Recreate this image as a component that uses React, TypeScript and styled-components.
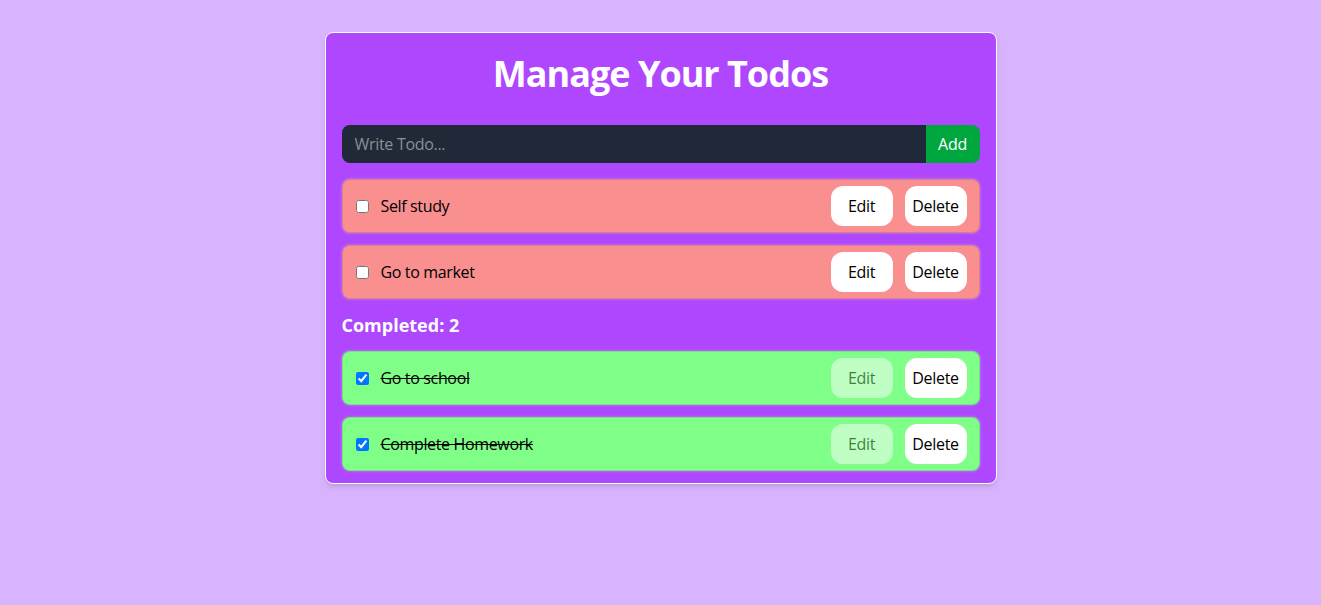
import React, { useState } from "react";
import styled, { createGlobalStyle } from "styled-components";

const GlobalStyle = createGlobalStyle`
  * { box-sizing: border-box; }
  html, body { margin: 0; padding: 0; }
  body {
    background: #d8b4fe;
    font-family: "Open Sans", "Noto Sans", Arial, sans-serif;
    min-height: 100vh;
  }
`;

const Page = styled.div`
  padding-top: 32px;
  display: flex;
  justify-content: center;
`;

const Card = styled.div`
  width: 672px;
  background: #ae47fe;
  border: 1px solid #ffffff;
  border-radius: 8px;
  box-shadow: 0 4px 6px -1px rgba(0, 0, 0, 0.1), 0 2px 4px -2px rgba(0, 0, 0, 0.1);
  padding: 12px 16px 0;
  color: #ffffff;
`;

const Title = styled.h1`
  margin: 9px 0 31px;
  font-size: 36px;
  line-height: 40px;
  font-weight: 700;
  letter-spacing: -1px;
  text-align: center;
  color: #ffffff;
`;

const Form = styled.form`
  display: flex;
  height: 38px;
  margin-bottom: 16px;
`;

const Input = styled.input`
  flex: 1;
  min-width: 0;
  border: none;
  outline: none;
  background: #1f2937;
  color: #ffffff;
  border-radius: 8px 0 0 8px;
  padding: 0 13px;
  font-family: inherit;
  font-size: 16px;
  letter-spacing: -0.3px;
  &::placeholder { color: #8b8f96; }
`;

const AddButton = styled.button`
  width: 54px;
  border: none;
  background: #00a63e;
  color: #ffffff;
  border-radius: 0 8px 8px 0;
  font-family: inherit;
  font-size: 16px;
  letter-spacing: -0.3px;
  cursor: pointer;
`;

const Row = styled.div<{ $done: boolean }>`
  display: flex;
  align-items: center;
  gap: 12px;
  height: 54px;
  padding: 0 12px 0 13px;
  margin-bottom: 12px;
  border: 1px solid rgba(0, 0, 0, 0.1);
  border-radius: 8px;
  background: ${(p) => (p.$done ? "#80ff88" : "#f98f8f")};
  box-shadow: 0 0 3px rgba(255, 255, 255, 0.35);
  color: #000000;
`;

const Check = styled.input`
  margin: 0;
  width: 13px;
  height: 13px;
  flex-shrink: 0;
`;

const TodoText = styled.span<{ $done: boolean }>`
  flex: 1;
  font-size: 16px;
  letter-spacing: -0.35px;
  text-decoration: ${(p) => (p.$done ? "line-through" : "none")};
`;

const SmallButton = styled.button`
  width: 62px;
  height: 40px;
  border: none;
  border-radius: 12px;
  background: #ffffff;
  color: #000000;
  font-family: inherit;
  font-size: 16px;
  letter-spacing: -0.3px;
  cursor: pointer;
  &:disabled { opacity: 0.5; cursor: default; }
`;

const Heading = styled.h2`
  margin: 0 0 12px;
  font-size: 18px;
  line-height: 28px;
  font-weight: 700;
  color: #ffffff;
`;

type Todo = { id: number; text: string; done: boolean };

const initial: Todo[] = [
  { id: 1, text: "Self study", done: false },
  { id: 2, text: "Go to market", done: false },
  { id: 3, text: "Go to school", done: true },
  { id: 4, text: "Complete Homework", done: true },
];

function TodoRow({ todo, onToggle }: { todo: Todo; onToggle: () => void }) {
  return (
    <Row $done={todo.done}>
      <Check type="checkbox" checked={todo.done} onChange={onToggle} />
      <TodoText $done={todo.done}>{todo.text}</TodoText>
      <SmallButton disabled={todo.done}>Edit</SmallButton>
      <SmallButton>Delete</SmallButton>
    </Row>
  );
}

export default function App() {
  const [todos, setTodos] = useState<Todo[]>(initial);
  const toggle = (id: number) =>
    setTodos((t) => t.map((x) => (x.id === id ? { ...x, done: !x.done } : x)));
  const pending = todos.filter((t) => !t.done);
  const done = todos.filter((t) => t.done);
  return (
    <>
      <GlobalStyle />
      <Page>
        <Card>
          <Title>Manage Your Todos</Title>
          <Form onSubmit={(e) => e.preventDefault()}>
            <Input placeholder="Write Todo..." />
            <AddButton type="submit">Add</AddButton>
          </Form>
          {pending.map((t) => (
            <TodoRow key={t.id} todo={t} onToggle={() => toggle(t.id)} />
          ))}
          <Heading>Completed: {done.length}</Heading>
          {done.map((t) => (
            <TodoRow key={t.id} todo={t} onToggle={() => toggle(t.id)} />
          ))}
        </Card>
      </Page>
    </>
  );
}
